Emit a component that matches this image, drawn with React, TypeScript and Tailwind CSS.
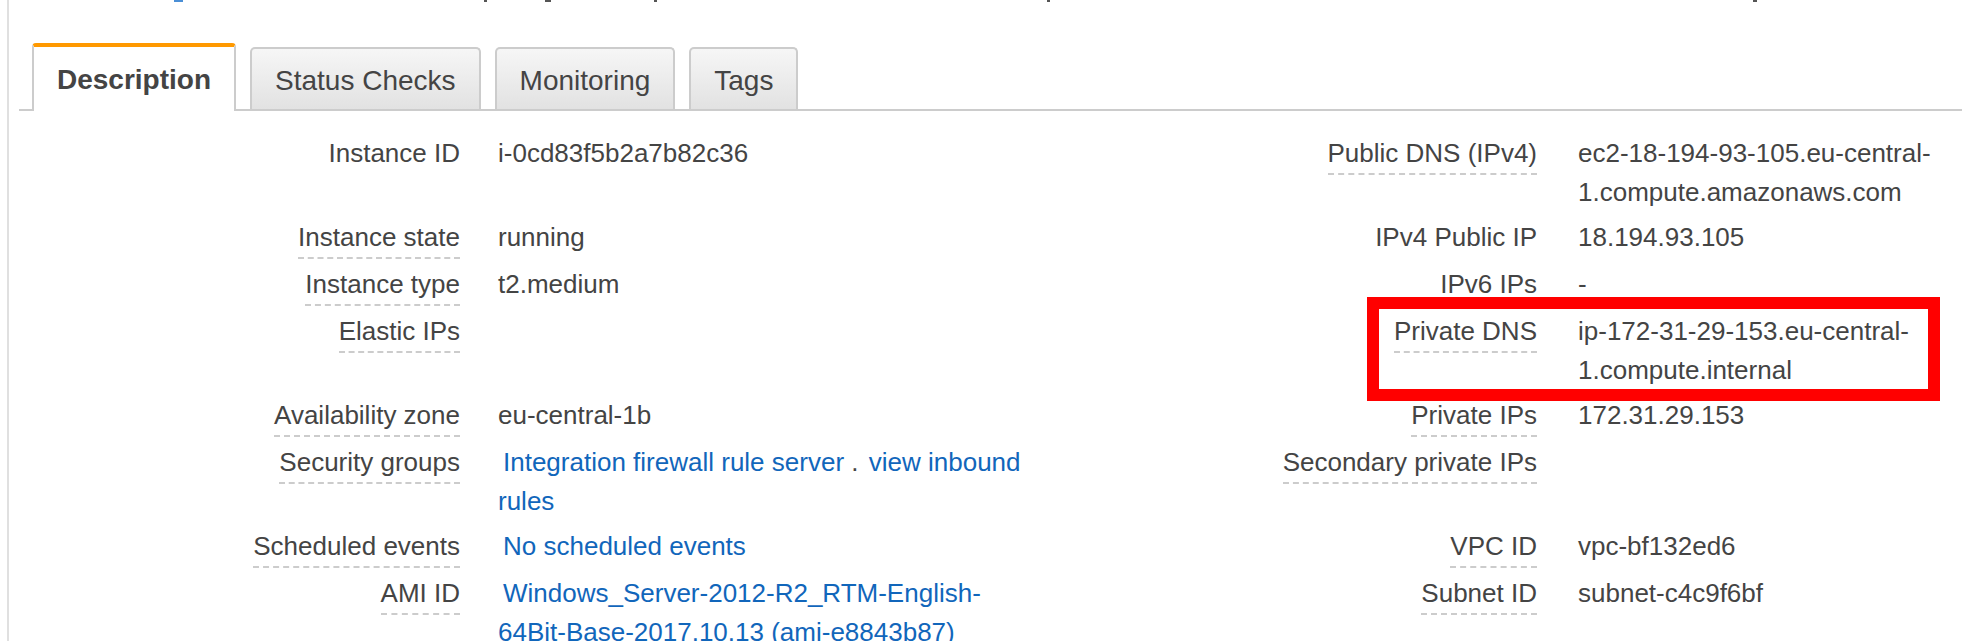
import React from "react";

type Cell = { label: string; dashed?: boolean; value?: React.ReactNode };

const linkCls = "text-[#1166bb]";

const rows: { l: Cell; r: Cell }[] = [
  {
    l: { label: "Instance ID", value: "i-0cd83f5b2a7b82c36" },
    r: {
      label: "Public DNS (IPv4)",
      dashed: true,
      value: (
        <>
          ec2-18-194-93-105.eu-central-
          <wbr />
          1.compute.amazonaws.com
        </>
      ),
    },
  },
  {
    l: { label: "Instance state", dashed: true, value: "running" },
    r: { label: "IPv4 Public IP", value: "18.194.93.105" },
  },
  {
    l: { label: "Instance type", dashed: true, value: "t2.medium" },
    r: { label: "IPv6 IPs", value: "-" },
  },
  {
    l: { label: "Elastic IPs", dashed: true },
    r: {
      label: "Private DNS",
      dashed: true,
      value: (
        <>
          ip-172-31-29-153.eu-central-
          <wbr />
          1.compute.internal
        </>
      ),
    },
  },
  {
    l: { label: "Availability zone", dashed: true, value: "eu-central-1b" },
    r: { label: "Private IPs", dashed: true, value: "172.31.29.153" },
  },
  {
    l: {
      label: "Security groups",
      dashed: true,
      value: (
        <>
          <span className="ml-[5px]" />
          <a className={linkCls}>Integration firewall rule server</a> .{" "}
          <a className={`${linkCls} ml-[3px]`}>view inbound rules</a>
        </>
      ),
    },
    r: { label: "Secondary private IPs", dashed: true },
  },
  {
    l: {
      label: "Scheduled events",
      dashed: true,
      value: <a className={`${linkCls} ml-[5px]`}>No scheduled events</a>,
    },
    r: { label: "VPC ID", dashed: true, value: "vpc-bf132ed6" },
  },
  {
    l: {
      label: "AMI ID",
      dashed: true,
      value: (
        <a className={`${linkCls} ml-[5px]`}>
          Windows_Server-2012-R2_RTM-English-
          <wbr />
          64Bit-Base-2017.10.13 (ami-e8843b87)
        </a>
      ),
    },
    r: { label: "Subnet ID", dashed: true, value: "subnet-c4c9f6bf" },
  },
];

function Label({ c }: { c: Cell }) {
  return (
    <div className="text-right">
      <span
        className={
          c.dashed ? "inline-block border-b-2 border-dashed border-[#cccccc]" : "inline-block"
        }
      >
        {c.label}
      </span>
    </div>
  );
}

function Tab({ label, active }: { label: string; active?: boolean }) {
  if (active) {
    return (
      <div className="relative -mb-[2px] flex h-[68px] items-center rounded-t-[4px] border-x-2 border-t-4 border-x-[#cccccc] border-t-[#ff9900] bg-white px-[23px] pt-[2px] text-[28px] font-bold text-[#444]">
        {label}
      </div>
    );
  }
  return (
    <div className="flex h-[62px] items-center rounded-t-[5px] border-2 border-b-0 border-[#cccccc] bg-gradient-to-b from-[#f6f6f6] to-[#e2e2e2] px-[23px] pt-[4px] text-[28px] text-[#444]">
      {label}
    </div>
  );
}

export default function App() {
  return (
    <div className="relative h-[641px] overflow-hidden bg-white font-['Liberation_Sans',Arial,sans-serif] text-[#444]">
      <div className="ml-[7px] h-[641px] border-l-2 border-[#e0e0e0]">
        {/* clipped tail of the line above */}
        <div className="flex h-[3px] items-start">
          <span className="ml-[165px] h-[2px] w-[9px] bg-[#4a8fd6]" />
          <span className="ml-[301px] h-[2px] w-[3px] bg-[#555]" />
          <span className="ml-[58px] h-[2px] w-[6px] bg-[#555]" />
          <span className="ml-[103px] h-[2px] w-[3px] bg-[#555]" />
          <span className="ml-[390px] h-[2px] w-[3px] bg-[#555]" />
          <span className="ml-[703px] h-[2px] w-[4px] bg-[#555]" />
        </div>

        <div className="ml-[10px] mt-[40px] flex items-end gap-[14px] border-b-2 border-[#cccccc] pl-[13px]">
          <Tab label="Description" active />
          <Tab label="Status Checks" />
          <Tab label="Monitoring" />
          <Tab label="Tags" />
        </div>

        <div className="mt-[23px] grid grid-cols-[451px_580px_497px_413px] gap-y-[6px] text-[26px] leading-[39px]">
          {rows.map((row, i) => (
            <React.Fragment key={i}>
              <Label c={row.l} />
              <div className="pl-[38px]">{row.l.value}</div>
              <Label c={row.r} />
              <div className="pl-[41px] pr-[4px]">{row.r.value}</div>
            </React.Fragment>
          ))}
        </div>
      </div>

      {/* annotation box */}
      <div className="absolute left-[1367px] top-[297px] h-[104px] w-[573px] border-[12px] border-[#ff0000]" />
    </div>
  );
}
